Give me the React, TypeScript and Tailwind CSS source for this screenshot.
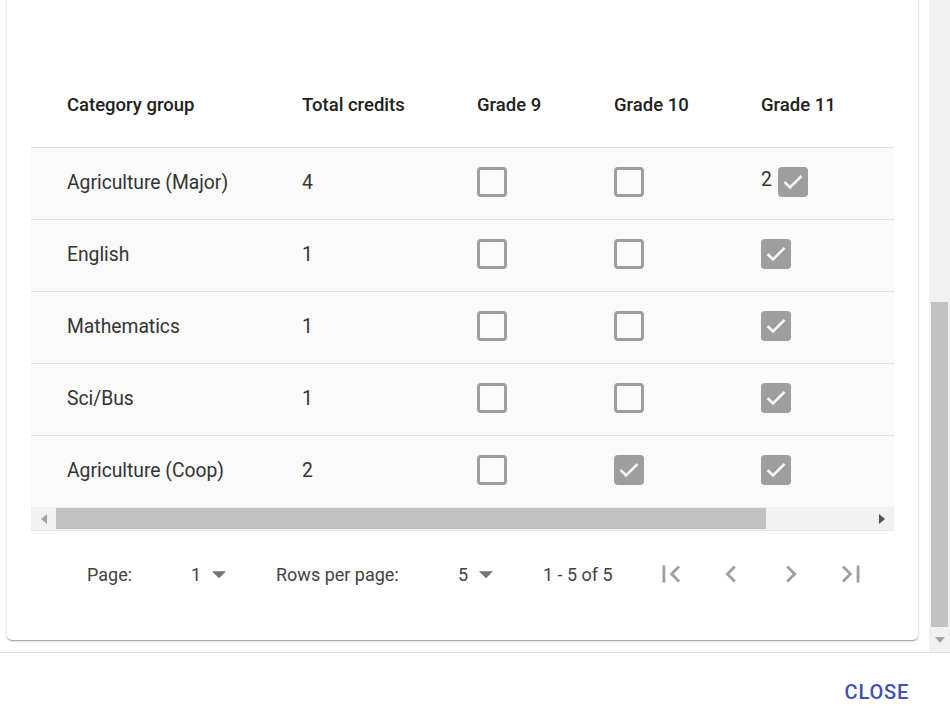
import type React from "react"

type Row = {
  name: string
  credits: number
  g9: boolean
  g10: boolean
  g11: boolean
  g11Count?: number
}

const rows: Row[] = [
  { name: "Agriculture (Major)", credits: 4, g9: false, g10: false, g11: true, g11Count: 2 },
  { name: "English", credits: 1, g9: false, g10: false, g11: true },
  { name: "Mathematics", credits: 1, g9: false, g10: false, g11: true },
  { name: "Sci/Bus", credits: 1, g9: false, g10: false, g11: true },
  { name: "Agriculture (Coop)", credits: 2, g9: false, g10: true, g11: true },
]

const Box: React.FC<{ checked: boolean }> = ({ checked }) =>
  checked ? (
    <div className="w-[30px] h-[30px] mb-[3px] rounded-[4px] bg-[#9e9e9e] flex items-center justify-center">
      <svg width="30" height="30" viewBox="0 0 30 30">
        <polyline points="6.5,15 12,20.5 23.5,9" fill="none" stroke="#f4f4f4" strokeWidth="2.6" />
      </svg>
    </div>
  ) : (
    <div className="w-[30px] h-[30px] mb-[3px] rounded-[4px] border-[3px] border-[#9e9e9e]"></div>
  )

const Icon: React.FC<{ d: string }> = ({ d }) => (
  <div className="w-[60px] h-[60px] flex items-center justify-center">
    <svg width="34" height="34" viewBox="0 0 24 24" fill="#a0a0a0">
      <path d={d} />
    </svg>
  </div>
)

const Caret: React.FC = () => (
  <svg width="34" height="34" viewBox="0 0 24 24" fill="#757575">
    <path d="M7 10l5 5 5-5z" />
  </svg>
)

const cols = "grid grid-cols-[235px_175px_137px_147px_147px_147px]"

const App: React.FC = () => {
  return (
    <div className="w-[950px] h-[724px] bg-white flex flex-col overflow-hidden font-['Roboto',sans-serif]">
      <div className="flex h-[652px]">
        {/* scrolling dialog content */}
        <div className="w-[929px] h-full flex flex-col justify-end overflow-hidden">
          <div className="ml-[7px] mr-[11px] mb-[12px] bg-white rounded-[5px] shadow-[0_1px_3px_rgba(0,0,0,0.2),0_1px_1px_rgba(0,0,0,0.14),0_2px_1px_-1px_rgba(0,0,0,0.12)] px-[24px] pt-[80px] pb-[23px]">
            <div className="overflow-hidden">
              <div className="w-[988px]">
                <div className={`${cols} h-[86px] pt-[4px] items-center text-[18.5px] font-medium text-[#212121]`}>
                  <div className="pl-[36px]">Category group</div>
                  <div className="pl-[36px]">Total credits</div>
                  <div className="pl-[36px]">Grade 9</div>
                  <div className="pl-[36px]">Grade 10</div>
                  <div className="pl-[36px]">Grade 11</div>
                  <div></div>
                </div>
                {rows.map((r) => (
                  <div
                    key={r.name}
                    className={`${cols} h-[72px] items-center border-t border-[#e0e0e0] bg-[#fafafa] text-[19.3px] text-[#333333]`}
                  >
                    <div className="pl-[36px]">{r.name}</div>
                    <div className="pl-[36px]">{r.credits}</div>
                    <div className="pl-[36px]">
                      <Box checked={r.g9} />
                    </div>
                    <div className="pl-[36px]">
                      <Box checked={r.g10} />
                    </div>
                    <div className="pl-[36px] flex items-center">
                      {r.g11Count !== undefined && (
                        <span className="mr-[6px] -mt-[7px]">{r.g11Count}</span>
                      )}
                      <Box checked={r.g11} />
                    </div>
                    <div></div>
                  </div>
                ))}
              </div>
            </div>

            {/* horizontal scrollbar */}
            <div className="h-[24px] bg-[#f1f1f1] border-b border-[#e6e6e6] flex items-center">
              <div className="w-[25px] h-full flex items-center justify-center">
                <svg width="6" height="10" viewBox="0 0 6 10">
                  <polygon points="6,0 0,5 6,10" fill="#a3a3a3" />
                </svg>
              </div>
              <div className="w-[710px] h-[21px] bg-[#c1c1c1]"></div>
              <div className="flex-1"></div>
              <div className="w-[25px] h-full flex items-center justify-center">
                <svg width="6" height="10" viewBox="0 0 6 10">
                  <polygon points="0,0 6,5 0,10" fill="#505050" />
                </svg>
              </div>
            </div>

            {/* pagination */}
            <div className="h-[86px] flex items-center text-[18px] text-[#424242]">
              <div className="w-[56px]"></div>
              <div className="w-[104px]">Page:</div>
              <div className="w-[85px] flex items-center">
                <span className="w-[11px]">1</span>
                <Caret />
              </div>
              <div className="w-[182px]">Rows per page:</div>
              <div className="w-[85px] flex items-center">
                <span className="w-[11px]">5</span>
                <Caret />
              </div>
              <div className="w-[98px]">1 - 5 of 5</div>
              <div className="flex">
                <Icon d="M18.41 16.59L13.82 12l4.59-4.59L17 6l-6 6 6 6zM6 6h2v12H6z" />
                <Icon d="M15.41 7.41L14 6l-6 6 6 6 1.41-1.41L10.83 12z" />
                <Icon d="M10 6L8.59 7.41 13.17 12l-4.58 4.59L10 18l6-6z" />
                <Icon d="M5.59 7.41L10.17 12l-4.58 4.59L7 18l6-6-6-6zM16 6h2v12h-2z" />
              </div>
            </div>
          </div>
        </div>

        {/* page scrollbar */}
        <div className="w-[21px] h-full bg-[#f1f1f1] flex flex-col">
          <div className="h-[302px]"></div>
          <div className="mx-[2px] h-[325px] bg-[#c1c1c1]"></div>
          <div className="flex-1 flex items-center justify-center">
            <svg width="10" height="6" viewBox="0 0 10 6">
              <polygon points="0,0 10,0 5,6" fill="#a3a3a3" />
            </svg>
          </div>
        </div>
      </div>

      {/* dialog actions */}
      <div className="flex-1 border-t border-[#e0e0e0] flex items-center justify-end pr-[41px]">
        <button className="mt-[6px] text-[20px] font-medium tracking-[0.8px] text-[#3f51b5]">CLOSE</button>
      </div>
    </div>
  )
}

export default App
